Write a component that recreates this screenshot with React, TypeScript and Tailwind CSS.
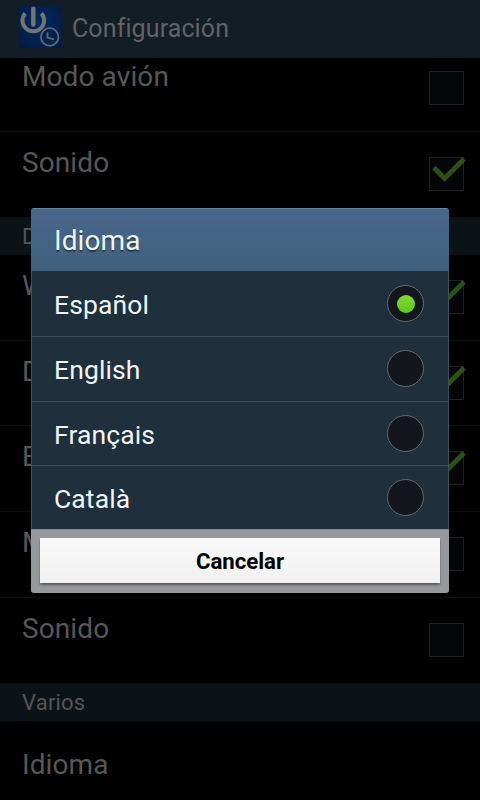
import { useState } from "react"

type Row = { label: string; checked: boolean }

const topRows: Row[] = [
  { label: "Modo avión", checked: false },
  { label: "Sonido", checked: true },
]

const deactivateRows: Row[] = [
  { label: "Wifi", checked: true },
  { label: "Datos", checked: true },
  { label: "Bluetooth", checked: true },
  { label: "Modo avión", checked: false },
  { label: "Sonido", checked: false },
]

const languages = ["Español", "English", "Français", "Català"]

/* ── App icon: power symbol + clock ── */
const AppIcon = () => (
  <svg width="42" height="42" viewBox="0 0 42 42" fill="none" className="shrink-0">
    <defs>
      <radialGradient id="tile" cx="0.5" cy="0.4" r="0.75">
        <stop offset="0" stopColor="#052a5c" />
        <stop offset="1" stopColor="#031944" />
      </radialGradient>
    </defs>
    <rect width="42" height="42" fill="url(#tile)" />
    <path d="M6.2 7.4A10.8 10.8 0 1 0 22.4 7.4" stroke="#707477" strokeWidth="4" />
    <path d="M14.3 2.8V18.5" stroke="#707477" strokeWidth="4.4" strokeLinecap="round" />
    <circle cx="30.7" cy="31" r="8.8" fill="#06214a" stroke="#5d6878" strokeWidth="1.8" />
    <path d="M28.5 26.5V31.5L35 33.3" stroke="#5d6878" strokeWidth="1.8" />
  </svg>
)

const Checkbox = ({ checked }: { checked: boolean }) => (
  <span className="relative mt-[25px] block h-[34px] w-[35px] shrink-0 border border-[#202020] bg-[#050608]">
    {checked && (
      <svg className="absolute -top-px left-0" width="38" height="28" viewBox="0 0 38 28" fill="none">
        <path d="M4 10.5L14.5 21.5L34 2" stroke="#2b5212" strokeWidth="4.8" />
      </svg>
    )}
  </span>
)

const SettingRow = ({ label, checked }: Row) => (
  <li className="flex h-[85.75px] items-start justify-between border-b border-[#0e0e0e] pr-4 pl-[22px]">
    <span className="mt-[14px] text-[28px] leading-[34px] tracking-[0.1px]">{label}</span>
    <Checkbox checked={checked} />
  </li>
)

const SectionHeader = ({ title }: { title: string }) => (
  <h2 className="h-[37px] bg-[#0b1317] pl-[22px] text-[22px] leading-[38px] tracking-[0.2px] text-[#555]">{title}</h2>
)

export default function App() {
  const [selected, setSelected] = useState("Español")
  const [open, setOpen] = useState(true)

  return (
    <div className="relative h-[800px] w-[480px] overflow-hidden bg-black font-['Roboto',sans-serif] text-[#575757]">
      <header className="relative z-10 flex h-[58px] items-start bg-[#121d25] pt-1.5 pl-[19px]">
        <AppIcon />
        <h1 className="ml-[11px] text-[25px] leading-[45px] tracking-[0.1px] text-[#616365]">Configuración</h1>
      </header>

      {/* The list is scrolled slightly under the header */}
      <main className="-mt-[11.6px]">
        <ul>
          {topRows.map((row) => (
            <SettingRow key={row.label} {...row} />
          ))}
        </ul>
        <SectionHeader title="Desactivar" />
        <ul>
          {deactivateRows.map((row) => (
            <SettingRow key={row.label} {...row} />
          ))}
        </ul>
        <SectionHeader title="Varios" />
        <button onClick={() => setOpen(true)} className="block h-[88px] w-full pl-[22px] text-left text-[28px] tracking-[0.1px]">
          Idioma
        </button>
      </main>

      {/* Language dialog */}
      {open && (
        <div
          role="dialog"
          aria-label="Idioma"
          className="absolute top-[208px] left-[31px] z-20 flex h-[385px] w-[418px] flex-col overflow-hidden rounded-[3px] bg-[#1f2f3c] text-[#eef4f9]"
        >
          <h2 className="h-[63px] shrink-0 border-t border-[#66829c] bg-linear-to-b from-[#48678a] to-[#42617e] pl-[23px] text-[28px] leading-[64px] tracking-[0.1px] [text-shadow:0_2px_1px_rgba(0,0,0,0.4)]">
            Idioma
          </h2>
          <ul className="h-[258px] shrink-0 border-x border-[#40515e]">
            {languages.map((lang) => (
              <li key={lang} className="h-[64.5px] border-b border-[#3a4d5b] first:h-[66px] last:h-[63px] last:border-b-0">
                <button
                  onClick={() => setSelected(lang)}
                  className="flex h-full w-full items-center justify-between pr-6 pl-[22px] text-[26.5px] leading-none tracking-[0.1px]"
                >
                  <span className="mt-[3px]">{lang}</span>
                  <span className="flex size-[37px] items-center justify-center rounded-full border-[1.5px] border-[#66696c] bg-[#13161a]">
                    {lang === selected && (
                      <span className="size-[18px] rounded-full bg-linear-to-b from-[#7fdb32] to-[#62c41c]" />
                    )}
                  </span>
                </button>
              </li>
            ))}
          </ul>
          <div className="h-16 shrink-0 border-t border-[#818688] bg-[#95999c] px-[9px] pt-2">
            <button
              onClick={() => setOpen(false)}
              className="h-[45px] w-full bg-linear-to-b from-[#f8f8f8] to-[#f1f1f1] pt-0.5 text-[22.2px] leading-[43px] font-bold text-black shadow-[0_2px_2px_rgba(0,0,0,0.4)]"
            >
              Cancelar
            </button>
          </div>
        </div>
      )}
    </div>
  )
}
